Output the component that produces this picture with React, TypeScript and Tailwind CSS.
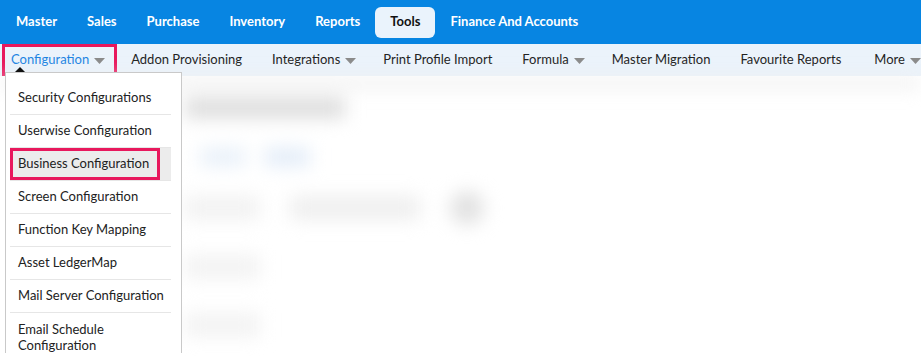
import React from 'react';

const mainNav = ['Master', 'Sales', 'Purchase', 'Inventory', 'Reports', 'Tools', 'Finance And Accounts'];

const subNav = [
  { label: 'Addon Provisioning', caret: false, cls: 'pl-[14px] pr-[15px]' },
  { label: 'Integrations', caret: true, cls: 'pl-[15px] pr-[12px]' },
  { label: 'Print Profile Import', caret: false, cls: 'px-[15px]' },
  { label: 'Formula', caret: true, cls: 'pl-[15px] pr-[12px]' },
  { label: 'Master Migration', caret: false, cls: 'px-[15px]' },
  { label: 'Favourite Reports', caret: false, cls: 'pl-[15px] pr-[18px]' },
  { label: 'More', caret: true, cls: 'pl-[15px] pr-[12px]' },
];

const menuItems = [
  'Security Configurations',
  'Userwise Configuration',
  'Business Configuration',
  'Screen Configuration',
  'Function Key Mapping',
  'Asset LedgerMap',
  'Mail Server Configuration',
];

const Caret = () => (
  <svg width="11" height="6" viewBox="0 0 11 6" className="ml-[5px] mt-[1px] shrink-0">
    <path d="M0 0h11L5.5 6z" fill="#8a8a8a" />
  </svg>
);

export default function App() {
  return (
    <div className="relative h-[356px] w-[921px] overflow-hidden bg-white font-['Lato','Open_Sans',sans-serif] text-[#222]">
      {/* main bar */}
      <div className="flex h-[44px] items-center bg-[#0785e2] pl-px">
        {mainNav.map((n) => (
          <div
            key={n}
            className={
              n === 'Tools'
                ? 'flex h-[31px] shrink-0 items-center whitespace-nowrap rounded-md bg-[#eaf3fc] px-[15px] text-[13px] font-bold text-[#111]'
                : 'flex h-[31px] shrink-0 items-center whitespace-nowrap px-[15px] text-[13px] font-bold text-white'
            }
          >
            {n}
          </div>
        ))}
      </div>

      {/* sub bar */}
      <div className="flex h-[32px] items-center whitespace-nowrap bg-[#ebf3fb] text-[13px] text-[#222]">
        <div className="ml-[2px] flex h-[32px] shrink-0 items-center border-[3px] border-[#e8185d] pl-[6px] pr-[9px] text-[#1d84e2]">
          Configuration
          <Caret />
        </div>
        {subNav.map((s) => (
          <div key={s.label} className={`flex h-[32px] shrink-0 items-center ${s.cls}`}>
            {s.label}
            {s.caret && <Caret />}
          </div>
        ))}
      </div>
      <div className="h-[2px] bg-white" />

      {/* blurred page content */}
      <div className="flex flex-col pl-[185px] blur-[9px]">
        <div className="-ml-[185px] h-[10px] bg-[#efefef]" />
        <div className="mt-[10px] h-[20px] w-[160px] bg-[#dcdcdc]" />
        <div className="mt-[30px] flex gap-[20px] pl-[15px]">
          <div className="h-[18px] w-[45px] bg-[#e8f0f9]" />
          <div className="h-[18px] w-[45px] bg-[#e2ecf8]" />
        </div>
        <div className="mt-[25px] flex items-center gap-[30px]">
          <div className="h-[24px] w-[75px] bg-[#f2f2f2]" />
          <div className="h-[24px] w-[130px] bg-[#efefef]" />
          <div className="h-[34px] w-[34px] rounded-full bg-[#e2e2e2]" />
        </div>
        <div className="mt-[30px] h-[24px] w-[75px] bg-[#f3f3f3]" />
        <div className="mt-[34px] h-[24px] w-[75px] bg-[#f3f3f3]" />
      </div>

      {/* dropdown pointer */}
      <svg width="12" height="6" viewBox="0 0 12 6" className="absolute left-[14px] top-[67px]">
        <path d="M0 6L6 0l6 6z" fill="#111" />
      </svg>

      {/* dropdown menu */}
      <div className="absolute left-[5px] top-[72px] w-[177px] border-x border-t border-[#c9c9c9] bg-white pl-[4px] pr-[10px] pt-[9px] text-[13px] text-[#222]">
        {menuItems.map((m) =>
          m === 'Business Configuration' ? (
            <div key={m} className="flex h-[33px] items-stretch border-b border-[#e6e6e6] bg-[#ececec]">
              <div className="flex w-[150px] items-center border-[3px] border-[#e8185d] pl-[5px]">{m}</div>
            </div>
          ) : (
            <div key={m} className="flex h-[33px] items-center border-b border-[#e6e6e6] pl-[8px]">
              {m}
            </div>
          )
        )}
        <div className="pl-[8px] pt-[8px] leading-[16px]">
          Email Schedule
          <br />
          Configuration
        </div>
      </div>
    </div>
  );
}
